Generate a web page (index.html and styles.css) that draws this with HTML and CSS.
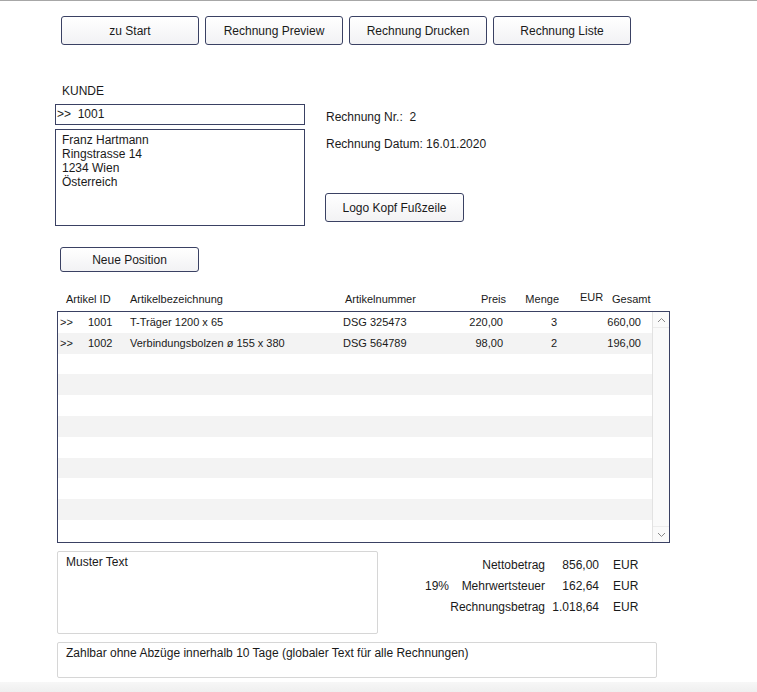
FILE: index.html
```html
<!DOCTYPE html>
<html lang="de">
<head>
<meta charset="utf-8">
<title>Rechnung</title>
<link rel="stylesheet" href="styles.css">
</head>
<body>
<div class="page">
  <div class="toolbar">
    <button class="btn">zu Start</button>
    <button class="btn">Rechnung Preview</button>
    <button class="btn">Rechnung Drucken</button>
    <button class="btn">Rechnung Liste</button>
  </div>

  <div class="customer">
    <div class="cust-left">
      <div class="label">KUNDE</div>
      <div class="field">&gt;&gt;&nbsp; 1001</div>
      <div class="address">Franz Hartmann<br>Ringstrasse 14<br>1234 Wien<br>Österreich</div>
    </div>
    <div class="cust-right">
      <div class="info info-nr">Rechnung Nr.:&nbsp; 2</div>
      <div class="info info-date">Rechnung Datum: 16.01.2020</div>
      <button class="btn btn-logo">Logo Kopf Fußzeile</button>
    </div>
  </div>

  <button class="btn btn-new">Neue Position</button>

  <div class="thead">
    <span class="h-id">Artikel ID</span>
    <span class="h-name">Artikelbezeichnung</span>
    <span class="h-nr">Artikelnummer</span>
    <span class="h-preis">Preis</span>
    <span class="h-menge">Menge</span>
    <span class="h-eur">EUR</span>
    <span class="h-ges">Gesamt</span>
  </div>

  <div class="table">
    <div class="rows">
      <div class="row"><span>&gt;&gt;</span><span>1001</span><span>T-Träger 1200 x 65</span><span>DSG 325473</span><span class="r">220,00</span><span class="r">3</span><span class="r">660,00</span></div>
      <div class="row"><span>&gt;&gt;</span><span>1002</span><span>Verbindungsbolzen ø 155 x 380</span><span>DSG 564789</span><span class="r">98,00</span><span class="r">2</span><span class="r">196,00</span></div>
      <div class="row"></div>
      <div class="row"></div>
      <div class="row"></div>
      <div class="row"></div>
      <div class="row"></div>
      <div class="row"></div>
      <div class="row"></div>
      <div class="row"></div>
      <div class="row"></div>
    </div>
    <div class="scrollbar">
      <div class="sb-btn sb-up"><svg width="9" height="6" viewBox="0 0 9 6"><path d="M1 5 L4.5 1.5 L8 5" fill="none" stroke="#888" stroke-width="1"/></svg></div>
      <div class="sb-track"></div>
      <div class="sb-btn sb-down"><svg width="9" height="6" viewBox="0 0 9 6"><path d="M1 1 L4.5 4.5 L8 1" fill="none" stroke="#888" stroke-width="1"/></svg></div>
    </div>
  </div>

  <div class="bottom">
    <div class="memo">Muster Text</div>
    <div class="totals">
      <span class="t-label span2">Nettobetrag</span><span class="t-amt">856,00</span><span class="t-cur">EUR</span>
      <span class="t-pct">19%</span><span class="t-label">Mehrwertsteuer</span><span class="t-amt">162,64</span><span class="t-cur">EUR</span>
      <span class="t-label span2">Rechnungsbetrag</span><span class="t-amt">1.018,64</span><span class="t-cur">EUR</span>
    </div>
  </div>

  <div class="note">Zahlbar ohne Abzüge innerhalb 10 Tage (globaler Text für alle Rechnungen)</div>

  <div class="statusbar"></div>
</div>
</body>
</html>
```

FILE: styles.css
```css
* { box-sizing: border-box; }
html, body { margin: 0; padding: 0; background: #fff; }
body {
  font-family: "Liberation Sans", Arial, sans-serif;
  font-size: 12px;
  color: #1a1a1a;
}
.page {
  border-top: 1px solid #a7a7a7;
  min-height: 692px;
  display: flex;
  flex-direction: column;
  align-items: flex-start;
}
.btn {
  font-family: "Liberation Sans", Arial, sans-serif;
  font-size: 12px;
  color: #1a1a1a;
  width: 139px;
  height: 29px;
  border: 1px solid #3a4163;
  border-radius: 3px;
  background: linear-gradient(#ffffff, #f2f2f4);
  padding: 0;
  text-align: center;
}
.toolbar {
  display: flex;
  gap: 6px;
  margin: 15px 0 0 61px;
}
.toolbar .btn { width: 138px; }
.customer {
  display: flex;
  gap: 21px;
  margin: 39px 0 0 55px;
}
.cust-left { width: 250px; display: flex; flex-direction: column; }
.label { line-height: 14px; padding-left: 7px; }
.field {
  margin-top: 6px;
  height: 21px;
  border: 1px solid #3a4163;
  line-height: 19px;
  padding-left: 1px;
}
.address {
  margin-top: 4px;
  height: 97px;
  border: 1px solid #3a4163;
  line-height: 14px;
  padding: 3px 0 0 6px;
}
.cust-right { display: flex; flex-direction: column; align-items: flex-start; padding-top: 26px; }
.info { line-height: 14px; }
.info-date { margin-top: 13px; }
.btn-logo { margin-top: 42px; margin-left: -1px; }
.btn-new { height: 25px; margin: 21px 0 0 60px; }

.thead {
  margin: 20px 0 0 57px;
  width: 613px;
  display: grid;
  grid-template-columns: 9px 64px 215px 101px 60px 53px 53px auto;
  line-height: 14px;
  font-size: 11px;
}
.thead span:first-child { grid-column: 2; }
.h-preis, .h-menge { text-align: right; }
.h-eur { padding-left: 21px; margin-top: -2px; }

.table {
  margin: 5px 0 0 57px;
  width: 613px;
  height: 232px;
  border: 1px solid #3a4163;
  display: flex;
}
.rows { flex: 1; }
.row {
  height: 20.8px;
  display: grid;
  grid-template-columns: 2px 28px 42px 213px 100px 60px 54px 84px;
  align-items: center;
  font-size: 11px;
}
.row span:first-child { grid-column: 2; }
.row:nth-child(even) { background: #f3f3f3; }
.row .r { text-align: right; }
.scrollbar {
  width: 17px;
  border-left: 1px solid #e2e2e2;
  background: #fafafa;
  display: flex;
  flex-direction: column;
}
.sb-btn { height: 16px; display: flex; align-items: center; justify-content: center; }
.sb-up { border-bottom: 1px solid #ececec; }
.sb-down { border-top: 1px solid #ececec; }
.sb-track { flex: 1; }

.bottom {
  margin: 8px 0 0 57px;
  display: flex;
}
.memo {
  width: 321px;
  height: 83px;
  border: 1px solid #d6d6d6;
  border-radius: 2px;
  padding: 3px 0 0 8px;
  line-height: 14px;
}
.totals {
  margin: 3px 0 0 47px;
  display: grid;
  grid-template-columns: 36px 84px 54px auto;
  grid-auto-rows: 21px;
  align-items: center;
}
.t-label { text-align: right; }
.span2 { grid-column: 1 / 3; }
.t-amt { text-align: right; }
.t-cur { padding-left: 14px; }

.note {
  margin: 8px 0 0 57px;
  width: 600px;
  height: 36px;
  border: 1px solid #d6d6d6;
  border-radius: 2px;
  padding: 3px 0 0 8px;
  line-height: 14px;
}
.statusbar {
  margin-top: auto;
  width: 100%;
  height: 10px;
  background: linear-gradient(#f7f7f7, #efefef);
}
```
